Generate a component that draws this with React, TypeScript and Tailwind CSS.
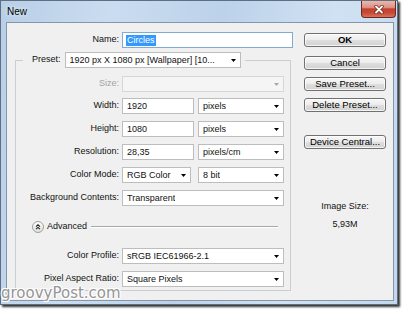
import React from "react";

const Arrow = ({ color = "#000" }: { color?: string }) => (
  <svg width="5" height="3" viewBox="0 0 5 3" className="shrink-0">
    <path d="M0 0H5L2.5 3Z" fill={color} />
  </svg>
);

function Select({
  text,
  className,
  disabled,
}: {
  text: string;
  className: string;
  disabled?: boolean;
}) {
  return (
    <div
      className={`flex h-[16px] items-center justify-between border pl-[4px] pr-[4px] leading-[14px] ${
        disabled ? "border-[#d6d6d6] bg-[#f5f5f5]" : "border-[#bdbdbd] bg-white"
      } ${className}`}
    >
      <span className="truncate whitespace-nowrap">{text}</span>
      <Arrow color={disabled ? "#a8a8a8" : "#000"} />
    </div>
  );
}

function Input({ text, className }: { text: string; className: string }) {
  return (
    <div className={`flex h-[16px] items-center border border-[#bdbdbd] bg-white pl-[4px] leading-[14px] ${className}`}>
      {text}
    </div>
  );
}

function Label({ children, gray }: { children: React.ReactNode; gray?: boolean }) {
  return (
    <div className={`w-[103px] shrink-0 whitespace-nowrap pr-0 text-right ${gray ? "text-[#a3a3a3]" : ""}`}>
      {children}
    </div>
  );
}

function Button({ children, bold }: { children: React.ReactNode; bold?: boolean }) {
  return (
    <div
      className={`flex h-[14px] items-center justify-center rounded-[3px] border border-[#707070] bg-[linear-gradient(#f7f7f7_0%,#ececec_50%,#dedede_52%,#d2d2d2_100%)] text-[9.5px] leading-none text-black shadow-[inset_0_0_0_1px_rgba(255,255,255,0.75)] ${
        bold ? "font-semibold" : ""
      }`}
    >
      {children}
    </div>
  );
}

function CloseButton() {
  return (
    <div className="ml-auto mr-[1px] flex h-[17px] w-[35px] items-center justify-center rounded-b-[4px] border border-t-0 border-[#6a2a22] bg-[linear-gradient(#eab8ae_0%,#dc9283_40%,#c2402f_50%,#c94a36_75%,#d9735c_100%)]">
      <svg width="10" height="9" viewBox="0 0 10 9">
        <path d="M2 1.5L8 7.5M8 1.5L2 7.5" stroke="#6b2a20" strokeWidth="3.4" strokeLinecap="round" />
        <path d="M2 1.5L8 7.5M8 1.5L2 7.5" stroke="#ffffff" strokeWidth="1.8" strokeLinecap="round" />
      </svg>
    </div>
  );
}

export default function App() {
  return (
    <div className="relative h-[312px] w-[405px] overflow-hidden bg-white text-[9px] text-[#111] [font-family:'Liberation_Sans',Arial,sans-serif]">
      <div className="flex h-[305px] w-[398px] flex-col border border-[#5f6e80] bg-[linear-gradient(100deg,#b8cfe7_0%,#cadcf0_25%,#bcd2ea_50%,#d0e1f3_75%,#c3d8ee_100%)] shadow-[2px_2px_2px_rgba(0,0,0,0.8)]">
        {/* title bar */}
        <div className="flex h-[21px] shrink-0 items-start">
          <div className="pl-[6px] pt-[5px] text-[10px] leading-[12px] text-black [text-shadow:0_0_5px_#fff]">
            New
          </div>
          <CloseButton />
        </div>

        {/* client area */}
        <div className="mb-[3px] ml-[5px] mr-[3px] flex flex-1 border border-[#8696a9] bg-[#f0f0f0]">
          {/* left */}
          <div className="flex w-[286px] shrink-0 flex-col pl-[8px]">
            <div className="mt-[9px] flex items-center">
              <div className="w-[104px] shrink-0 text-right">Name:</div>
              <div className="ml-[3px] flex h-[16px] w-[171px] items-center border border-[#84a9d3] bg-white pl-[3px]">
                <span className="bg-[#3399ff] px-px leading-[11px] text-white">Circles</span>
              </div>
            </div>

            <fieldset className="mt-[4px] w-[276px] border border-[#c9ced3] p-0 pb-[3px]">
              <legend className="ml-[7px] p-0">
                <div className="flex items-center pl-[9px] pr-[4px]">
                  <span className="whitespace-nowrap">Preset:</span>
                  <Select className="ml-[4px] w-[176px]" text="1920 px X 1080 px [Wallpaper] [10..." />
                </div>
              </legend>

              <div className="mt-[8px] flex items-center">
                <Label gray>Size:</Label>
                <Select className="ml-[3px] w-[162px]" text="" disabled />
              </div>

              <div className="mt-[6px] flex items-center">
                <Label>Width:</Label>
                <Input className="ml-[3px] w-[72px]" text="1920" />
                <Select className="ml-[4px] w-[86px]" text="pixels" />
              </div>

              <div className="mt-[7px] flex items-center">
                <Label>Height:</Label>
                <Input className="ml-[3px] w-[72px]" text="1080" />
                <Select className="ml-[4px] w-[86px]" text="pixels" />
              </div>

              <div className="mt-[7px] flex items-center">
                <Label>Resolution:</Label>
                <Input className="ml-[3px] w-[72px]" text="28,35" />
                <Select className="ml-[4px] w-[86px]" text="pixels/cm" />
              </div>

              <div className="mt-[7px] flex items-center">
                <Label>Color Mode:</Label>
                <Select className="ml-[3px] w-[69px]" text="RGB Color" />
                <Select className="ml-[7px] w-[86px]" text="8 bit" />
              </div>

              <div className="mt-[7px] flex items-center">
                <Label>Background Contents:</Label>
                <Select className="ml-[3px] w-[162px]" text="Transparent" />
              </div>

              <div className="mt-[15px] flex h-[12px] items-center pl-[16px] pr-[12px]">
                <div className="flex h-[12px] w-[12px] shrink-0 items-center justify-center rounded-full border border-[#a0a0a0] bg-[linear-gradient(#ffffff,#dedede)]">
                  <svg width="6" height="6" viewBox="0 0 6 6">
                    <path d="M1 2.6L3 0.8L5 2.6M1 5.2L3 3.4L5 5.2" stroke="#222" strokeWidth="1.1" fill="none" />
                  </svg>
                </div>
                <span className="ml-[3px] whitespace-nowrap">Advanced</span>
                <div className="ml-[4px] h-[2px] flex-1 border-b border-t border-b-white border-t-[#a8a8a8]" />
              </div>

              <div className="mt-[15px] flex items-center">
                <Label>Color Profile:</Label>
                <Select className="ml-[3px] w-[162px]" text="sRGB IEC61966-2.1" />
              </div>

              <div className="mt-[7px] flex items-center">
                <Label>Pixel Aspect Ratio:</Label>
                <Select className="ml-[3px] w-[162px]" text="Square Pixels" />
              </div>
            </fieldset>
          </div>

          {/* right */}
          <div className="ml-[11px] flex w-[82px] shrink-0 flex-col">
            <div className="mt-[10px]">
              <Button bold>OK</Button>
            </div>
            <div className="mt-[9px]">
              <Button>Cancel</Button>
            </div>
            <div className="mt-[7px]">
              <Button>Save Preset...</Button>
            </div>
            <div className="mt-[7px]">
              <Button>Delete Preset...</Button>
            </div>
            <div className="mt-[23px]">
              <Button>Device Central...</Button>
            </div>
            <div className="mt-[51px] text-center leading-[12px]">Image Size:</div>
            <div className="mt-[6px] text-center leading-[12px]">5,93M</div>
          </div>
        </div>
      </div>

      <div className="absolute left-[1px] top-[286px] text-[15px] leading-[15px] text-[#959595] [font-family:'DejaVu_Sans',sans-serif] [text-shadow:1px_1px_0_#fff,-1px_-1px_0_#fff,1px_-1px_0_#fff,-1px_1px_0_#fff]">
        groovyPost.com
      </div>
    </div>
  );
}
